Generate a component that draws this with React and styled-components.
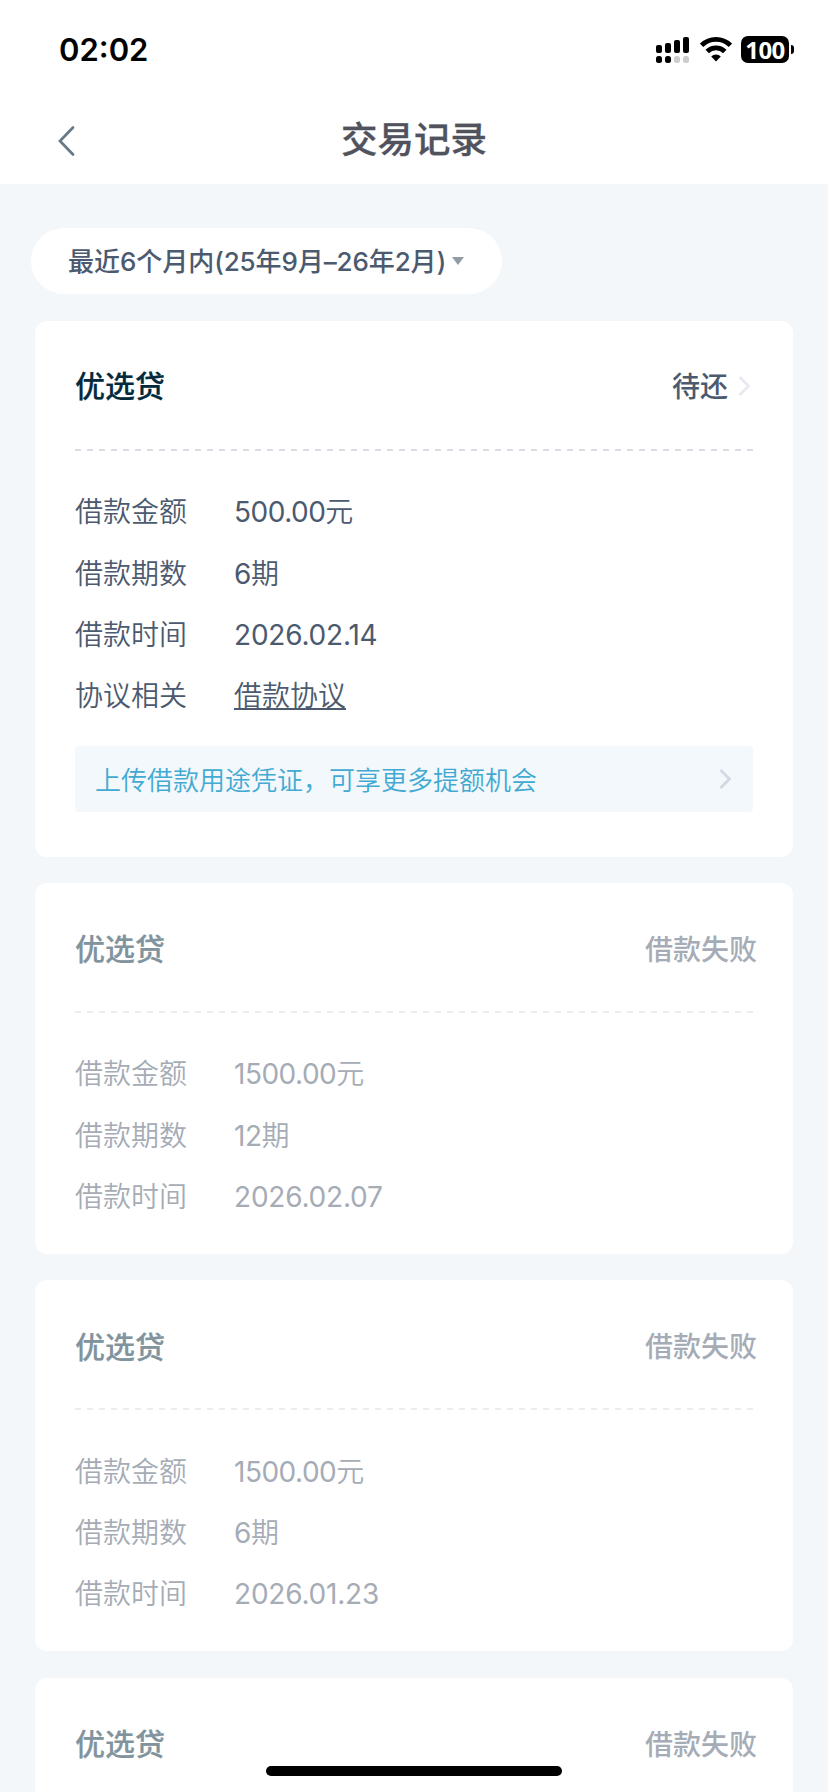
import React from 'react'
import styled, { createGlobalStyle, css } from 'styled-components'

const GlobalStyle = createGlobalStyle`
  * {
    box-sizing: border-box;
  }

  body {
    margin: 0;
    background: #f3f7fa;
    font-family: 'Inter', 'Noto Sans CJK SC', sans-serif;
    overflow: hidden;
  }
`

const Screen = styled.div`
  height: 1792px;
  overflow: hidden;
  background: #f3f7fa;
`

const TopBar = styled.header`
  height: 184px;
  background: #fff;
`

const StatusBar = styled.div`
  display: flex;
  align-items: center;
  justify-content: space-between;
  height: 99px;
  padding: 0 34px 0 59px;
`

const Time = styled.span`
  font-size: 31px;
  font-weight: 600;
  line-height: 40px;
  color: #000;
`

const StatusIcons = styled.div`
  display: flex;
  align-items: center;
`

const SignalSvg = styled.svg`
  margin-right: 11px;
`

const WifiSvg = styled.svg`
  margin-right: 9px;
`

const Battery = styled.span`
  width: 48px;
  height: 27px;
  border-radius: 7px;
  background: #000;
  color: #fff;
  font-family: 'Noto Sans', sans-serif;
  font-size: 24px;
  font-weight: 700;
  line-height: 27px;
  letter-spacing: -0.5px;
  text-align: center;
`

const BatteryTip = styled.span`
  width: 3px;
  height: 9px;
  margin-left: 2px;
  border-radius: 0 4px 4px 0;
  background: #000;
`

const TitleBar = styled.div`
  display: grid;
  grid-template-columns: 100px 1fr 100px;
  align-items: center;
  height: 84px;
`

const BackButton = styled.button`
  display: flex;
  padding: 0 0 0 57px;
  border: 0;
  background: none;
`

const PageTitle = styled.h1`
  margin: 0;
  padding-bottom: 3px;
  font-size: 36.5px;
  font-weight: 500;
  line-height: 50px;
  text-align: center;
  color: #50535e;
  -webkit-text-stroke: 0.3px;
`

const Content = styled.main`
  padding: 44px 35px 0;
`

const Period = styled.button`
  display: flex;
  align-items: center;
  width: 471px;
  height: 66px;
  margin: 0 0 27px -4px;
  padding: 0 0 0 37px;
  border: 0;
  border-radius: 33px;
  background: #fff;
  font-family: inherit;
  font-size: 26px;
  font-weight: 500;
  color: #4b5a6e;
  white-space: nowrap;
`

const PeriodText = styled.span`
  padding-bottom: 3px;
`

const Caret = styled.span`
  margin-left: 6px;
  border: 6px solid transparent;
  border-top: 8px solid #909ca6;
  border-bottom: 0;
`

const Latin = styled.span`
  font-weight: ${props => props.$weight || 400};
  letter-spacing: ${props => props.$spacing || '-0.5px'};
`

const Card = styled.section`
  height: ${props => props.$height}px;
  margin-bottom: 26.4px;
  padding: 0 40px;
  border-radius: 12px;
  background: #fff;
  color: #4b5a6e;

  ${props =>
    props.$failed &&
    css`
      color: #a5acb6;
    `}
`

const CardHeader = styled.div`
  display: flex;
  align-items: center;
  height: 128px;
  margin-right: ${props => (props.$failed ? '-4px' : '0')};
  padding-top: ${props => (props.$failed ? '5px' : '2px')};
`

const Product = styled.h2`
  margin: 0 auto 0 0;
  font-size: 30px;
  font-weight: 500;
  line-height: 42px;
  color: ${props => (props.$failed ? '#81939c' : '#042a3b')};
  -webkit-text-stroke: 0.2px;
`

const Status = styled.span`
  padding-top: 1px;
  font-size: 28px;
  font-weight: 500;
  line-height: 40px;
`

const StatusArrow = styled.svg`
  margin: 0 3px 0 10px;
`

const Divider = styled.div`
  height: 2px;
  background: repeating-linear-gradient(
    90deg,
    ${props => (props.$failed ? '#ebecee' : '#dbdce5')} 0 6px,
    transparent 6px 12px
  );
`

const Rows = styled.dl`
  margin: 0;
  padding-top: 31.4px;
`

const Row = styled.div`
  display: flex;
  height: 61.2px;
  font-size: 28px;
  font-weight: 350;
  line-height: 61px;
`

const Label = styled.dt`
  width: 159px;
`

const Value = styled.dd`
  margin: 0;
`

const Agreement = styled.a`
  text-decoration: underline;
  text-decoration-thickness: 2px;
  text-underline-offset: 2px;
`

const Notice = styled.a`
  display: flex;
  align-items: center;
  justify-content: space-between;
  height: 66px;
  margin: 18.6px 0 0;
  padding: 0 21px 0 20px;
  border-radius: 4px;
  background: #f3f8fc;
  font-size: 26px;
  font-weight: 350;
  color: #42aad2;
`

const HomeIndicator = styled.div`
  position: fixed;
  left: 266px;
  bottom: 16px;
  width: 296px;
  height: 10px;
  border-radius: 5px;
  background: #000;
`

const records = [
  {
    id: 1,
    status: '待还',
    amount: '500.00',
    terms: '6',
    date: '2026.02.14',
    open: true,
  },
  {
    id: 2,
    status: '借款失败',
    amount: '1500.00',
    terms: '12',
    date: '2026.02.07',
  },
  {
    id: 3,
    status: '借款失败',
    amount: '1500.00',
    terms: '6',
    date: '2026.01.23',
  },
  {
    id: 4,
    status: '借款失败',
  },
]

const Signal = () => (
  <SignalSvg width="33" height="27" viewBox="0 0 33 27">
    <rect x="0" y="9" width="6" height="8" rx="2" />
    <rect x="9" y="7" width="6" height="10" rx="2" />
    <rect x="18" y="4" width="6" height="13" rx="2" />
    <rect x="27" y="1" width="6" height="16" rx="2" />
    <rect x="0" y="20" width="6" height="7" rx="2.5" />
    <rect x="9" y="20" width="6" height="7" rx="2.5" />
    <rect x="18" y="20" width="6" height="7" rx="2.5" fill="#ccc" />
    <rect x="27" y="20" width="6" height="7" rx="2.5" fill="#ccc" />
  </SignalSvg>
)

const Wifi = () => (
  <WifiSvg width="32" height="25" viewBox="0 0 32 25">
    <g fill="none" stroke="#000" strokeWidth="4.8">
      <path d="M1.6 8.4a20.4 20.4 0 0 1 28.8 0" />
      <path d="M7.2 14.5a12.4 12.4 0 0 1 17.6 0" />
    </g>
    <path d="M11.2 19.4a6.8 6.8 0 0 1 9.6 0L16 24.4z" />
  </WifiSvg>
)

const RecordCard = ({ record }) => {
  const failed = !record.open

  return (
    <Card $failed={failed} $height={record.open ? 535.6 : 371}>
      <CardHeader $failed={failed}>
        <Product $failed={failed}>优选贷</Product>
        <Status>{record.status}</Status>
        {record.open && (
          <StatusArrow width="12" height="22" viewBox="0 0 12 22" fill="none">
            <path d="M1.5 2l9 9-9 9" stroke="#e8eaf2" strokeWidth="2.8" />
          </StatusArrow>
        )}
      </CardHeader>
      <Divider $failed={failed} />
      {record.amount && (
        <Rows>
          <Row>
            <Label>借款金额</Label>
            <Value>
              <Latin>{record.amount}</Latin>元
            </Value>
          </Row>
          <Row>
            <Label>借款期数</Label>
            <Value>
              <Latin>{record.terms}</Latin>期
            </Value>
          </Row>
          <Row>
            <Label>借款时间</Label>
            <Value>
              <Latin $spacing="-0.2px">{record.date}</Latin>
            </Value>
          </Row>
          {record.open && (
            <Row>
              <Label>协议相关</Label>
              <Value>
                <Agreement>借款协议</Agreement>
              </Value>
            </Row>
          )}
        </Rows>
      )}
      {record.open && (
        <Notice>
          上传借款用途凭证，可享更多提额机会
          <svg width="13" height="22" viewBox="0 0 13 22" fill="none">
            <path d="M1.5 2l9 9-9 9" stroke="#d3d9e4" strokeWidth="2.8" />
          </svg>
        </Notice>
      )}
    </Card>
  )
}

const PeriodNumber = ({ children }) => (
  <Latin $weight={500} $spacing="-0.15px">
    {children}
  </Latin>
)

const App = () => (
  <Screen>
    <GlobalStyle />
    <TopBar>
      <StatusBar>
        <Time>02:02</Time>
        <StatusIcons>
          <Signal />
          <Wifi />
          <Battery>100</Battery>
          <BatteryTip />
        </StatusIcons>
      </StatusBar>
      <TitleBar>
        <BackButton aria-label="返回">
          <svg width="18" height="32" viewBox="0 0 18 32" fill="none">
            <path
              d="M16 2.5L3 16l13 13.5"
              stroke="#657888"
              strokeWidth="2.7"
              strokeLinecap="round"
            />
          </svg>
        </BackButton>
        <PageTitle>交易记录</PageTitle>
      </TitleBar>
    </TopBar>
    <Content>
      <Period>
        <PeriodText>
          最近<PeriodNumber>6</PeriodNumber>个月内
          <PeriodNumber>(25</PeriodNumber>年<PeriodNumber>9</PeriodNumber>月
          <PeriodNumber>–26</PeriodNumber>年<PeriodNumber>2</PeriodNumber>月
          <PeriodNumber>)</PeriodNumber>
        </PeriodText>
        <Caret />
      </Period>
      {records.map(record => (
        <RecordCard key={record.id} record={record} />
      ))}
    </Content>
    <HomeIndicator />
  </Screen>
)

export default App
